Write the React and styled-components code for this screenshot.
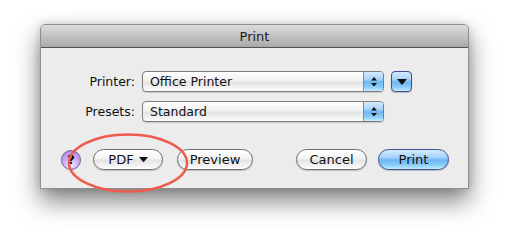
import React from 'react'
import styled, { createGlobalStyle, css } from 'styled-components'

const GlobalStyle = createGlobalStyle`
    html, body {
        margin: 0;
        padding: 0;
        background: #ffffff;
    }
    body {
        font-family: "DejaVu Sans", "Liberation Sans", sans-serif;
        font-size: 12.5px;
        color: #111;
    }
`

const aqua = css`
    border: 1px solid #3f4f92;
    background: linear-gradient(#d4ebfd 0%, #a3d2fa 40%, #6cb6f4 52%, #8ccdf9 80%, #c4f0ff 100%);
`

const Page = styled.div`
    width: 509px;
    height: 244px;
    padding: 24px 40px 0;
    box-sizing: border-box;
`

const Window = styled.div`
    position: relative;
    width: 429px;
    height: 165px;
    box-sizing: border-box;
    border: 1px solid #8f8f8f;
    border-radius: 5px 5px 0 0;
    background: #ececec;
    box-shadow: 0 12px 24px rgba(0, 0, 0, 0.5), 0 0 8px rgba(0, 0, 0, 0.15);
    display: flex;
    flex-direction: column;
`

const TitleBar = styled.div`
    height: 22px;
    border-bottom: 1px solid #515151;
    border-radius: 4px 4px 0 0;
    background: linear-gradient(#dcdcdc, #a9a9a9);
    display: flex;
    align-items: center;
    justify-content: center;
    font-size: 13px;
    color: #1a1a1a;
`

const Body = styled.div`
    flex: 1;
    padding: 23px 19px 0 20px;
    display: flex;
    flex-direction: column;
`

const Form = styled.div`
    display: grid;
    grid-template-columns: 74px 242px 21px;
    column-gap: 7px;
    row-gap: 9px;
    align-items: center;
`

const Label = styled.div`
    text-align: right;
`

const Popup = styled.div`
    height: 21px;
    box-sizing: border-box;
    border: 1px solid #7c7c7c;
    border-radius: 4px;
    background: linear-gradient(#ffffff 0%, #f1f1f1 45%, #e4e4e4 55%, #fbfbfb 100%);
    display: flex;
    align-items: center;
    overflow: hidden;
    box-shadow: 0 1px 1px rgba(0, 0, 0, 0.15);
`

const PopupText = styled.span`
    flex: 1;
    padding-left: 7px;
    line-height: 19px;
`

const Stepper = styled.div`
    ${aqua};
    width: 19px;
    height: 19px;
    border-width: 0 0 0 1px;
    border-color: #6f8fc4;
    display: flex;
    flex-direction: column;
    align-items: center;
    justify-content: center;
    gap: 2px;
`

const SquareButton = styled.div`
    ${aqua};
    width: 21px;
    height: 21px;
    box-sizing: border-box;
    border-radius: 4px;
    display: flex;
    align-items: center;
    justify-content: center;
    box-shadow: 0 1px 1px rgba(0, 0, 0, 0.2);
`

const Spacer = styled.div`
    flex: 1;
`

const ButtonRow = styled.div`
    display: flex;
    align-items: center;
    margin-top: 27px;
`

const HelpButton = styled.div`
    width: 20px;
    height: 20px;
    box-sizing: border-box;
    border-radius: 50%;
    border: 1px solid #6d5a93;
    background: radial-gradient(circle at 50% 80%, #f4e8ff 0%, #cdaef2 45%, #a982dc 100%);
    display: flex;
    align-items: center;
    justify-content: center;
    font-weight: bold;
    font-size: 13px;
    color: #000;
    margin-right: 12px;
`

const Button = styled.div`
    height: 21px;
    width: ${(p) => p.width}px;
    margin-left: ${(p) => p.gap || 0}px;
    box-sizing: border-box;
    border-radius: 11px;
    border: 1px solid ${(p) => (p.primary ? '#3f4f92' : '#6f6f6f')};
    background: ${(p) =>
        p.primary
            ? 'linear-gradient(#d4ebfd 0%, #a3d2fa 40%, #6cb6f4 52%, #8ccdf9 80%, #c4f0ff 100%)'
            : 'linear-gradient(#ffffff 0%, #f3f3f3 45%, #e3e3e3 55%, #fdfdfd 100%)'};
    box-shadow: 0 1px 1px rgba(0, 0, 0, 0.2);
    display: flex;
    align-items: center;
    justify-content: center;
    gap: 5px;
    font-size: 13px;
    color: #111;
`

const Ring = styled.svg`
    position: absolute;
    left: 25px;
    top: 106px;
    pointer-events: none;
`

const Tri = ({ up, size = 7 }) => (
    <svg width={size} height={size * 0.6} viewBox="0 0 10 6">
        <path d={up ? 'M0 6 L5 0 L10 6 Z' : 'M0 0 L10 0 L5 6 Z'} fill="#111" />
    </svg>
)

const PopupButton = ({ value }) => (
    <Popup>
        <PopupText>{value}</PopupText>
        <Stepper>
            <Tri up size={6} />
            <Tri size={6} />
        </Stepper>
    </Popup>
)

export default function App() {
    return (
        <Page>
            <GlobalStyle />
            <Window>
                <TitleBar>Print</TitleBar>
                <Body>
                    <Form>
                        <Label>Printer:</Label>
                        <PopupButton value="Office Printer" />
                        <SquareButton>
                            <Tri size={10} />
                        </SquareButton>
                        <Label>Presets:</Label>
                        <PopupButton value="Standard" />
                    </Form>
                    <ButtonRow>
                        <HelpButton>?</HelpButton>
                        <Button width={70}>
                            PDF <Tri size={9} />
                        </Button>
                        <Button width={76} gap={14}>Preview</Button>
                        <Spacer />
                        <Button width={71}>Cancel</Button>
                        <Button width={71} gap={11} primary>Print</Button>
                    </ButtonRow>
                </Body>
                <Ring width="124" height="64" viewBox="0 0 124 64">
                    <ellipse cx="62" cy="32" rx="59" ry="28.5" fill="none" stroke="#ee5a4c" strokeWidth="2.5" />
                </Ring>
            </Window>
        </Page>
    )
}
